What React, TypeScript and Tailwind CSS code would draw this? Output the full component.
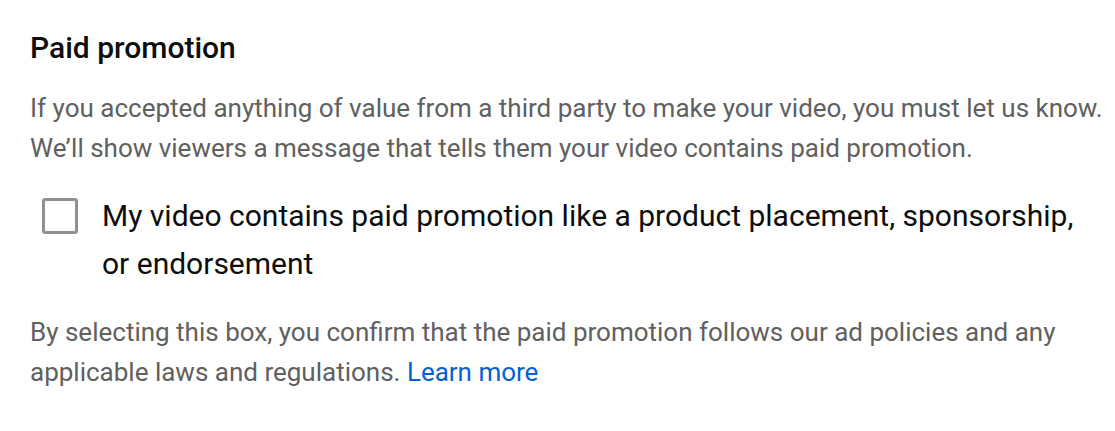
export default function App() {
  return (
    <section className="w-[1115px] h-[431px] bg-white pl-[30px] pt-[28px] font-['Roboto',sans-serif]">
      <h2 className="text-[30px] leading-[40px] font-medium text-[#0d0d0d]">Paid promotion</h2>
      <p className="mt-[20px] whitespace-nowrap text-[26px] leading-[40px] text-[#606060]">
        If you accepted anything of value from a third party to make your video, you must let us know.
        <br />
        We’ll show viewers a message that tells them your video contains paid promotion.
      </p>
      <label className="mt-[24px] flex items-start gap-[24px] pl-[12px]">
        <span className="mt-[6px] h-[36px] w-[36px] shrink-0 rounded-[3px] border-[3px] border-[#909090]" />
        <span className="whitespace-nowrap text-[30px] leading-[48px] text-[#0d0d0d]">
          My video contains paid promotion like a product placement, sponsorship,
          <br />
          or endorsement
        </span>
      </label>
      <p className="mt-[24px] whitespace-nowrap text-[26px] leading-[40px] text-[#606060]">
        By selecting this box, you confirm that the paid promotion follows our ad policies and any
        <br />
        applicable laws and regulations. <a className="text-[#065fd4]">Learn more</a>
      </p>
    </section>
  );
}
